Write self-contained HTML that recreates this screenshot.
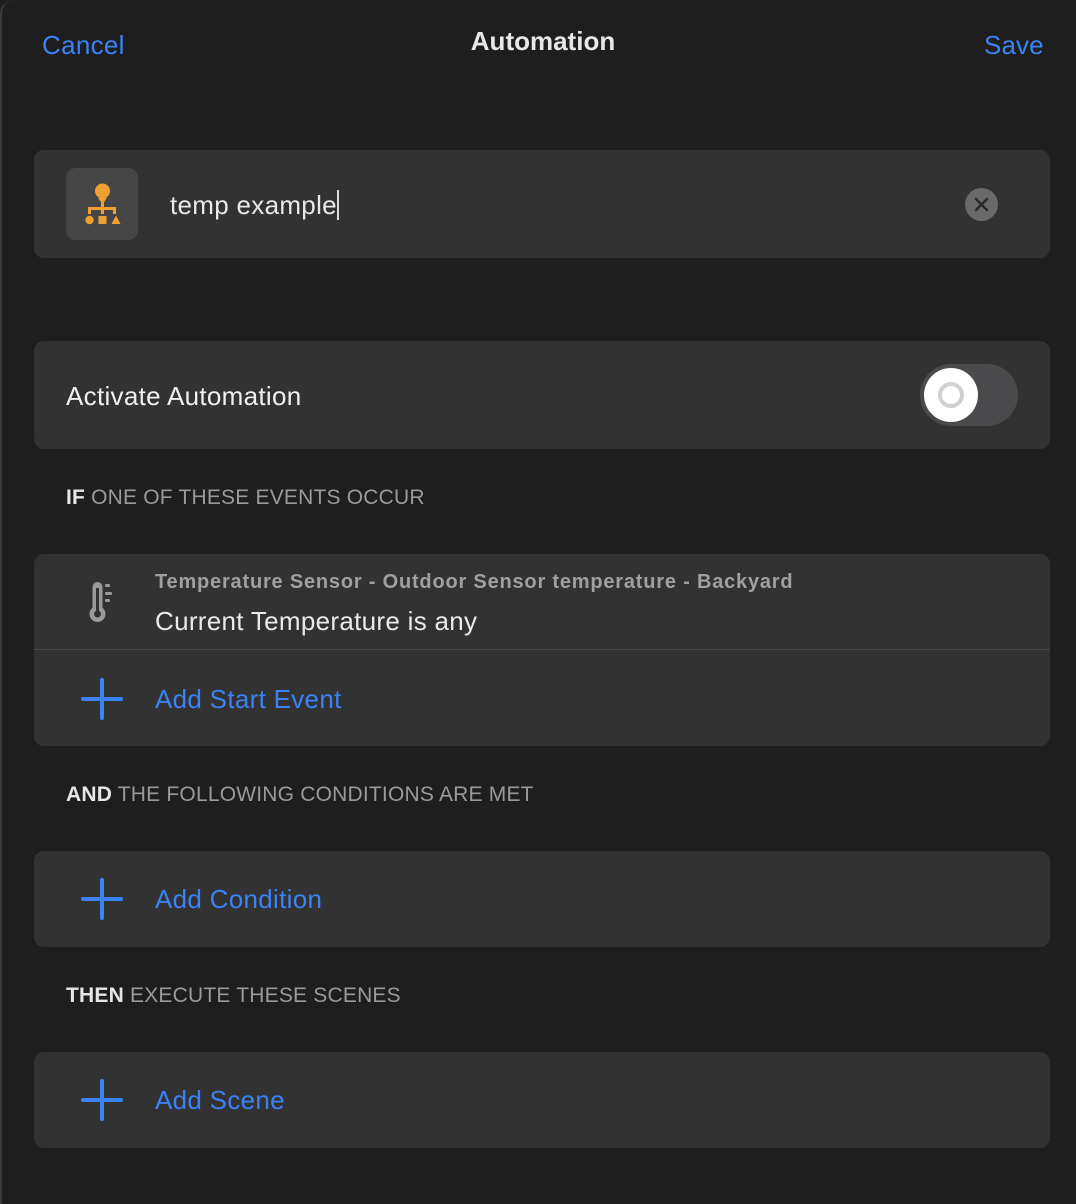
<!DOCTYPE html>
<html><head><meta charset="utf-8"><style>
*{margin:0;padding:0;box-sizing:border-box}
body{width:1076px;height:1204px;background:#1e1e1e;font-family:"Liberation Sans",sans-serif;position:relative;overflow:hidden;color:#fff}
.edge{position:absolute;left:0;top:0;width:1076px;height:1204px;border-left:2px solid #3a3a3a;border-top-left-radius:14px;pointer-events:none}
.abs{position:absolute}
.card{position:absolute;left:34px;width:1016px;background:#323232;border-radius:10px}
.blue{color:#3b82f6}
.hdr{font-size:21px;color:#9a9a9a;position:absolute;left:66px;letter-spacing:0.2px}
.hdr b{color:#e6e6e6;font-weight:bold}
.plus{position:absolute;left:81px;width:42px;height:42px}
.plus:before,.plus:after{content:"";position:absolute;background:#3b82f6;border-radius:2px}
.plus:before{left:19px;top:0;width:4px;height:42px}
.plus:after{top:19px;left:0;height:4px;width:42px}
.lbl{position:absolute;left:155px;font-size:26px;letter-spacing:0.3px;color:#3b82f6}
</style></head><body>
<div class="edge"></div>
<div class="abs blue" style="left:42px;top:30px;font-size:26px;letter-spacing:0.3px">Cancel</div>
<div class="abs" style="left:0;width:1086px;text-align:center;top:26px;font-size:26px;font-weight:bold;color:#e8e8e8">Automation</div>
<div class="abs blue" style="left:984px;top:30px;font-size:26px;letter-spacing:0.1px">Save</div>

<div class="card" style="top:150px;height:108px">
  <div class="abs" style="left:32px;top:18px;width:72px;height:72px;background:#464646;border-radius:10px">
    <svg width="72" height="72" viewBox="0 0 72 72" fill="#f0a030">
      <circle cx="36.5" cy="23" r="7.5"/>
      <polygon points="32,30 41,30 36.5,36"/>
      <rect x="35" y="33" width="3" height="7"/>
      <rect x="22" y="39" width="28" height="3"/>
      <rect x="22" y="39" width="3" height="7"/>
      <rect x="47" y="39" width="3" height="7"/>
      <rect x="35" y="39" width="3" height="7"/>
      <circle cx="23.5" cy="52" r="4.2"/>
      <rect x="32.5" y="48" width="8" height="8"/>
      <polygon points="50,47.5 54.5,56 45.5,56"/>
    </svg>
  </div>
  <div class="abs" style="left:136px;top:40px;font-size:26px;letter-spacing:0.3px;color:#e8e8e8">temp example<span style="display:inline-block;width:2px;height:30px;background:#ddd;vertical-align:-6px"></span></div>
  <div class="abs" style="left:931px;top:38px;width:33px;height:33px;border-radius:50%;background:#6a6a6a">
    <svg width="33" height="33" viewBox="0 0 33 33" stroke="#2a2a2a" stroke-width="2.4" stroke-linecap="round"><path d="M11 11L22 22M22 11L11 22"/></svg>
  </div>
</div>

<div class="card" style="top:341px;height:108px">
  <div class="abs" style="left:32px;top:40px;font-size:26px;letter-spacing:0.3px;color:#f0f0f0">Activate Automation</div>
  <div class="abs" style="left:886px;top:23px;width:98px;height:62px;border-radius:31px;background:#4a4a4c"></div>
  <div class="abs" style="left:890px;top:27px;width:54px;height:54px;border-radius:50%;background:#fff">
    <div class="abs" style="left:14px;top:14px;width:26px;height:26px;border-radius:50%;border:4px solid #d0d0d0"></div>
  </div>
</div>

<div class="hdr" style="top:486px"><b>IF</b> ONE OF THESE EVENTS OCCUR</div>

<div class="card" style="top:554px;height:192px">
  <svg class="abs" style="left:44px;top:20px" width="40" height="56" viewBox="0 0 40 56">
    <rect x="14.5" y="8" width="10" height="34" rx="5" fill="#9a9a9a"/>
    <circle cx="19.5" cy="40" r="8" fill="#9a9a9a"/>
    <circle cx="19.5" cy="40" r="3.5" fill="#323232"/>
    <rect x="18" y="14" width="3" height="24" fill="#323232"/>
    <rect x="27" y="10" width="5" height="3" rx="1" fill="#9a9a9a"/>
    <rect x="27" y="18" width="7" height="3" rx="1" fill="#9a9a9a"/>
    <rect x="27" y="25" width="5" height="3" rx="1" fill="#9a9a9a"/>
  </svg>
  <div class="abs" style="left:121px;top:17px;font-size:20px;letter-spacing:0.8px;font-weight:bold;color:#a0a0a0">Temperature Sensor - Outdoor Sensor temperature - Backyard</div>
  <div class="abs" style="left:121px;top:52px;font-size:26px;letter-spacing:0.3px;color:#eaeaea">Current Temperature is any</div>
  <div class="abs" style="left:0;top:95px;width:1016px;height:1px;background:#484848"></div>
  <div class="plus" style="left:47px;top:124px"></div>
  <div class="lbl" style="left:121px;top:130px">Add Start Event</div>
</div>

<div class="hdr" style="top:783px"><b>AND</b> THE FOLLOWING CONDITIONS ARE MET</div>
<div class="card" style="top:851px;height:96px">
  <div class="plus" style="left:47px;top:27px"></div>
  <div class="lbl" style="left:121px;top:33px">Add Condition</div>
</div>

<div class="hdr" style="top:984px"><b>THEN</b> EXECUTE THESE SCENES</div>
<div class="card" style="top:1052px;height:96px">
  <div class="plus" style="left:47px;top:27px"></div>
  <div class="lbl" style="left:121px;top:33px">Add Scene</div>
</div>
</body></html>
